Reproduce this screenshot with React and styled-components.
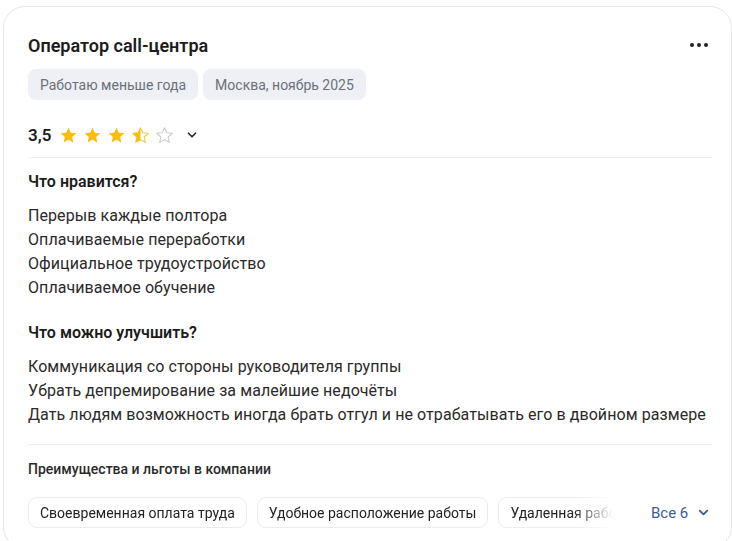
import React from 'react'
import styled, { createGlobalStyle } from 'styled-components'

const GlobalStyle = createGlobalStyle`
	body {
		margin: 0;
		background: #ffffff;
		font-family: Roboto, 'Noto Sans', Arial, sans-serif;
		color: #1f1f1f;
	}
`

const likes = [
	'Перерыв каждые полтора',
	'Оплачиваемые переработки',
	'Официальное трудоустройство',
	'Оплачиваемое обучение',
]

const improve = [
	'Коммуникация со стороны руководителя группы',
	'Убрать депремирование за малейшие недочёты',
	'Дать людям возможность иногда брать отгул и не отрабатывать его в двойном размере',
]

const perks = [
	'Своевременная оплата труда',
	'Удобное расположение работы',
	'Удаленная работа',
]

const STAR = 'M12 2.2l2.9 6.3 6.9.7-5.2 4.7 1.5 6.8L12 17.3l-6.1 3.4 1.5-6.8-5.2-4.7 6.9-.7z'

const Star = ({ fill }) => (
	<svg width='19' height='19' viewBox='0 0 24 24'>
		<defs>
			<clipPath id='half'>
				<rect x='0' y='0' width='12' height='24' />
			</clipPath>
		</defs>
		{fill === 'full' && <path d={STAR} fill='#fbbd0d' />}
		{fill === 'half' && (
			<>
				<path d={STAR} fill='none' stroke='#f5c542' strokeWidth='1.3' strokeLinejoin='round' />
				<path d={STAR} fill='#fbbd0d' clipPath='url(#half)' />
			</>
		)}
		{fill === 'empty' && (
			<path d={STAR} fill='none' stroke='#c9cbd0' strokeWidth='1.3' strokeLinejoin='round' />
		)}
	</svg>
)

const Chevron = ({ color = '#333', size = 14 }) => (
	<svg width={size} height={size} viewBox='0 0 16 16'>
		<path d='M4 6l4 4 4-4' fill='none' stroke={color} strokeWidth='2' strokeLinecap='round' strokeLinejoin='round' />
	</svg>
)

const App = () => {
	return (
		<>
			<GlobalStyle />
			<Card>
				<Header>
					<Title>Оператор call-центра</Title>
					<MoreButton>
						<Dot />
						<Dot />
						<Dot />
					</MoreButton>
				</Header>
				<Tags>
					<Tag>Работаю меньше года</Tag>
					<Tag>Москва, ноябрь 2025</Tag>
				</Tags>
				<RatingRow>
					<Score>3,5</Score>
					<Stars>
						<Star fill='full' />
						<Star fill='full' />
						<Star fill='full' />
						<Star fill='half' />
						<Star fill='empty' />
					</Stars>
					<Toggle>
						<Chevron color='#2b2b2b' />
					</Toggle>
				</RatingRow>
				<Divider $gap={9} />
				<Section>
					<SectionTitle>Что нравится?</SectionTitle>
					<List>
						{likes.map((t) => (
							<Item key={t}>{t}</Item>
						))}
					</List>
				</Section>
				<Section>
					<SectionTitle>Что можно улучшить?</SectionTitle>
					<List>
						{improve.map((t) => (
							<Item key={t}>{t}</Item>
						))}
					</List>
				</Section>
				<Divider $gap={17} />
				<PerksTitle>Преимущества и льготы в компании</PerksTitle>
				<PerksRow>
					<Chips>
						{perks.map((p) => (
							<Chip key={p}>{p}</Chip>
						))}
					</Chips>
					<AllLink>
						Все 6
						<Chevron color='#3c5d95' size={15} />
					</AllLink>
				</PerksRow>
			</Card>
		</>
	)
}

export default App

const Card = styled.div`
	margin: 6px 0 0 3px;
	width: 729px;
	box-sizing: border-box;
	border: 1px solid #e6e7ea;
	border-radius: 22px;
	padding: 26px 19px 20px 24px;
	background: #fff;
	overflow: hidden;
`

const Header = styled.div`
	display: flex;
	align-items: center;
	justify-content: space-between;
	height: 24px;
`

const Title = styled.div`
	font-size: 18px;
	font-weight: 600;
	color: #1c1c1c;
`

const MoreButton = styled.div`
	display: flex;
	gap: 3px;
	align-items: center;
	padding: 0 4px 0 0;
`

const Dot = styled.span`
	width: 4px;
	height: 4px;
	border-radius: 50%;
	background: #222;
`

const Tags = styled.div`
	display: flex;
	gap: 5px;
	margin-top: 12px;
`

const Tag = styled.div`
	height: 31px;
	display: flex;
	align-items: center;
	padding: 0 12px;
	border-radius: 8px;
	background: #eef0f5;
	color: #6c707a;
	font-size: 14px;
`

const RatingRow = styled.div`
	display: flex;
	align-items: center;
	margin-top: 22px;
	height: 26px;
`

const Score = styled.span`
	font-size: 17px;
	font-weight: 600;
	color: #1c1c1c;
	margin-right: 8px;
`

const Stars = styled.div`
	display: flex;
	gap: 5px;
`

const Toggle = styled.span`
	display: flex;
	margin-left: 11px;
`

const Divider = styled.div`
	height: 1px;
	background: #eeeff1;
	margin-top: ${(p) => p.$gap}px;
`

const Section = styled.div`
	margin-top: 14px;
	& + & {
		margin-top: 23px;
	}
`

const SectionTitle = styled.div`
	font-size: 16px;
	font-weight: 600;
	color: #1c1c1c;
	line-height: 20px;
`

const List = styled.div`
	margin-top: 12px;
	display: flex;
	flex-direction: column;
`

const Item = styled.div`
	font-size: 16px;
	line-height: 24px;
	letter-spacing: 0.075px;
	color: #2a2a2a;
`

const PerksTitle = styled.div`
	margin-top: 15px;
	font-size: 14px;
	font-weight: 500;
	color: #2a2a2a;
	line-height: 18px;
`

const PerksRow = styled.div`
	display: flex;
	align-items: center;
	margin-top: 19px;
`

const Chips = styled.div`
	display: flex;
	gap: 10px;
	width: 588px;
	overflow: hidden;
	mask-image: linear-gradient(to right, #000 545px, transparent 585px);
`

const Chip = styled.div`
	flex: none;
	height: 31px;
	display: flex;
	align-items: center;
	padding: 0 11px;
	border: 1px solid #ebecef;
	border-radius: 9px;
	box-sizing: border-box;
	font-size: 14px;
	color: #222;
`

const AllLink = styled.div`
	display: flex;
	align-items: center;
	gap: 8px;
	margin-left: 35px;
	font-size: 15px;
	color: #3c5d95;
`
